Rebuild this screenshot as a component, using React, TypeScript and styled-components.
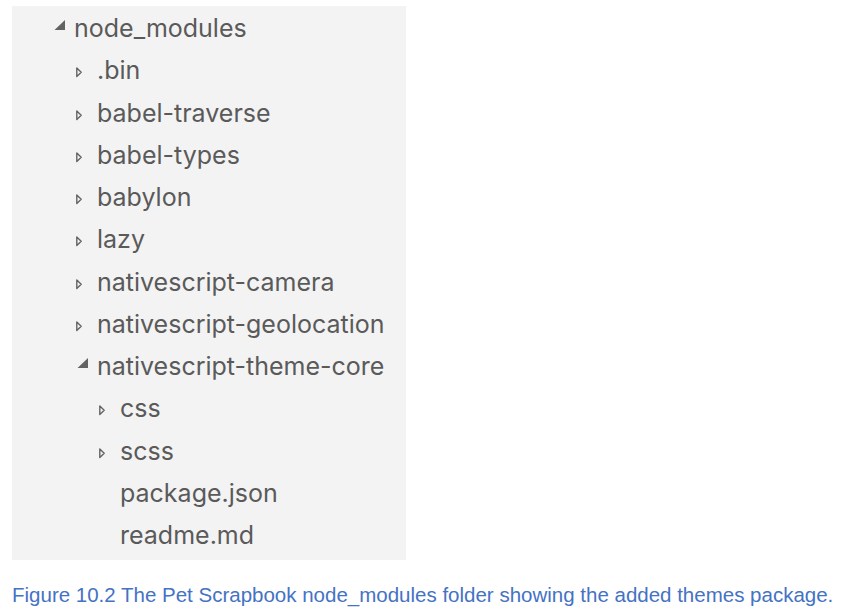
import React from 'react';
import styled, { createGlobalStyle } from 'styled-components';

const GlobalStyle = createGlobalStyle`
  html, body {
    margin: 0;
    padding: 0;
    background: #ffffff;
  }
`;

const Page = styled.div`
  padding: 6px 0 0 12px;
`;

const TreePanel = styled.ul`
  list-style: none;
  margin: 0;
  padding: 1px 0 4px 0;
  width: 394px;
  height: 554px;
  box-sizing: border-box;
  background: #f3f3f3;
`;

const Row = styled.li<{ $depth: number }>`
  display: flex;
  align-items: center;
  height: 42.25px;
  padding-left: ${(p) => 41 + p.$depth * 23}px;
  font-family: Inter, "Open Sans", sans-serif;
  font-size: 25px;
  color: #5a5a5a;
  white-space: nowrap;
`;

const Twisty = styled.span`
  display: inline-flex;
  align-items: center;
  width: 21px;
  height: 16px;
  flex: none;
`;

const Caption = styled.p`
  margin: 23px 0 0 0;
  font-family: "Liberation Sans", Arial, sans-serif;
  font-size: 20.5px;
  color: #4472c4;
  white-space: nowrap;
`;

type Node = { name: string; depth: number; kind: 'open' | 'closed' | 'file' };

const nodes: Node[] = [
  { name: 'node_modules', depth: 0, kind: 'open' },
  { name: '.bin', depth: 1, kind: 'closed' },
  { name: 'babel-traverse', depth: 1, kind: 'closed' },
  { name: 'babel-types', depth: 1, kind: 'closed' },
  { name: 'babylon', depth: 1, kind: 'closed' },
  { name: 'lazy', depth: 1, kind: 'closed' },
  { name: 'nativescript-camera', depth: 1, kind: 'closed' },
  { name: 'nativescript-geolocation', depth: 1, kind: 'closed' },
  { name: 'nativescript-theme-core', depth: 1, kind: 'open' },
  { name: 'css', depth: 2, kind: 'closed' },
  { name: 'scss', depth: 2, kind: 'closed' },
  { name: 'package.json', depth: 2, kind: 'file' },
  { name: 'readme.md', depth: 2, kind: 'file' },
];

const ExpandedIcon = () => (
  <svg width="21" height="16" viewBox="0 0 21 16">
    <path d="M12 0 L12 10 L1.5 10 Z" fill="#636363" />
  </svg>
);

const CollapsedIcon = () => (
  <svg width="21" height="16" viewBox="0 0 21 16">
    <path d="M0.8 6 L5.2 10.2 L0.8 14.4 Z" fill="none" stroke="#636363" strokeWidth="1.4" strokeLinejoin="round" />
  </svg>
);

export default function App() {
  return (
    <Page>
      <GlobalStyle />
      <TreePanel>
        {nodes.map((n) => (
          <Row key={n.name} $depth={n.depth}>
            <Twisty>
              {n.kind === 'open' && <ExpandedIcon />}
              {n.kind === 'closed' && <CollapsedIcon />}
            </Twisty>
            {n.name}
          </Row>
        ))}
      </TreePanel>
      <Caption>Figure 10.2 The Pet Scrapbook node_modules folder showing the added themes package.</Caption>
    </Page>
  );
}
